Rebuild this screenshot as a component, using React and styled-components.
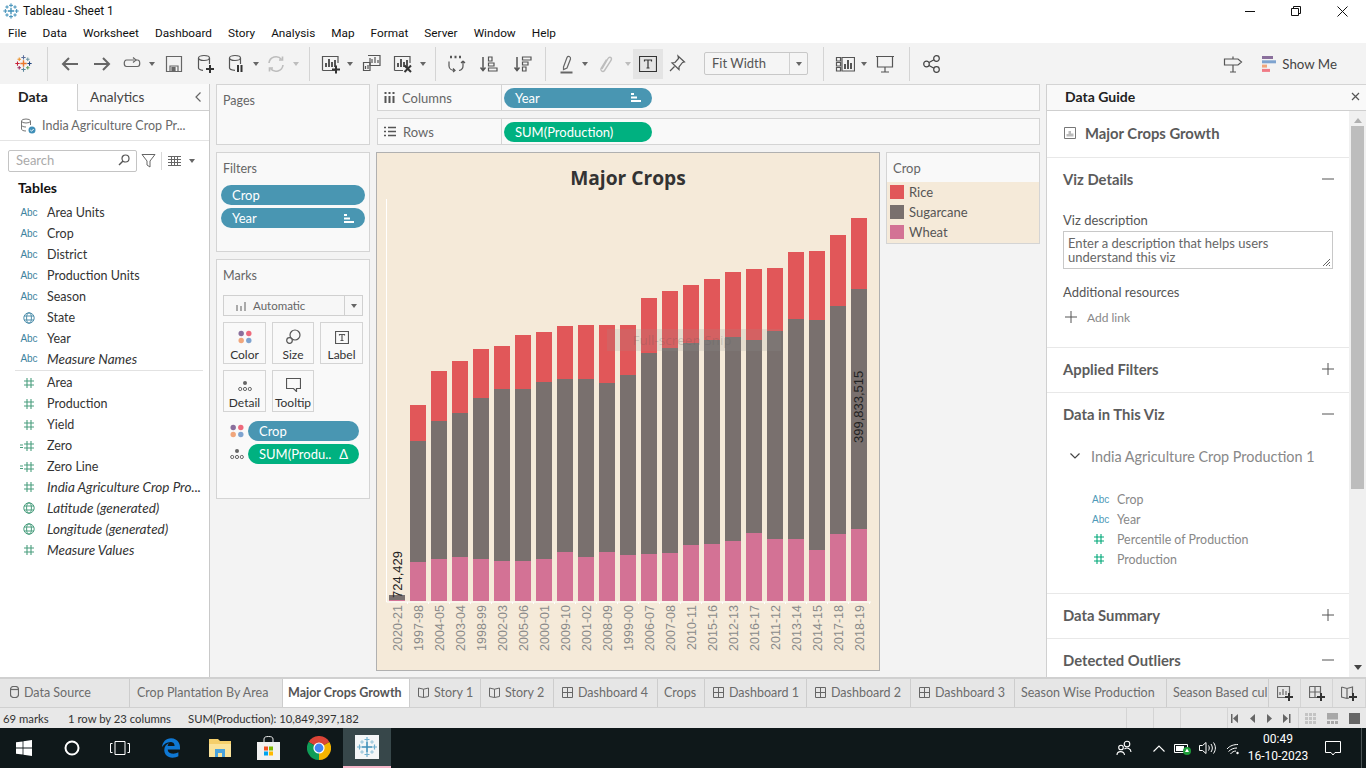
import React from 'react'
import styled, { createGlobalStyle } from 'styled-components'
import { FaEdgeLegacy } from 'react-icons/fa'

const BOOK = `Lato, "Open Sans", sans-serif`
const UI = `Roboto, "Open Sans", sans-serif`

const GlobalStyle = createGlobalStyle`
    html, body {
        margin: 0;
        padding: 0;
        overflow: hidden;
        background: #fff;
    }
    * {
        box-sizing: border-box;
    }
    svg {
        display: block;
        flex: none;
    }
`

const Page = styled.div`
    width: 1366px;
    height: 768px;
    display: flex;
    flex-direction: column;
    overflow: hidden;
    font-family: ${BOOK};
    font-size: 12.5px;
    color: #333;
`

/* window title + menu */
const TitleBar = styled.div`
    height: 22px;
    display: flex;
    align-items: center;
    padding-left: 3px;
    font-family: ${UI};
    font-size: 11.9px;
    color: #111;
`
const TitleText = styled.span`
    margin-left: 4px;
`
const WinButtons = styled.div`
    margin-left: auto;
    margin-right: 1px;
    display: flex;
`
const WinButton = styled.div`
    width: 46px;
    height: 20px;
    display: flex;
    align-items: center;
    justify-content: center;
`
const MenuBar = styled.div`
    height: 21px;
    display: flex;
    align-items: center;
    gap: 16px;
    padding-left: 8px;
    font-family: ${UI};
    font-size: 11.8px;
    color: #111;
`

/* toolbar */
const Toolbar = styled.div`
    height: 41px;
    display: flex;
    align-items: center;
    background: #f3f3f3;
`
const Tool = styled.div`
    width: ${p => p.$w}px;
    height: 30px;
    display: flex;
    align-items: center;
    justify-content: center;
    background: ${p => (p.$active ? '#e4e4e4' : 'transparent')};
`
const LogoTool = styled(Tool)`
    padding-left: 5px;
`
const ToolSep = styled.div`
    width: 1px;
    height: 34px;
    margin: 0 6px;
    background: #d4d4d4;
`
const Caret = styled.span`
    display: block;
    width: 0;
    height: 0;
    flex: none;
    border-left: 3.5px solid transparent;
    border-right: 3.5px solid transparent;
    border-top: 4px solid ${p => (p.$faded ? '#bdbdbd' : '#666')};
`
const FitBox = styled.div`
    width: 104px;
    height: 23px;
    margin: 0 9px 0 13px;
    display: flex;
    align-items: center;
    border: 1px solid #c8c8c8;
    border-radius: 2px;
    background: #f5f5f5;
    font-size: 13px;
    color: #555;
`
const FitLabel = styled.span`
    flex: 1;
    padding-left: 7px;
    padding-bottom: 2px;
`
const FitArrow = styled.span`
    width: 18px;
    height: 100%;
    display: flex;
    align-items: center;
    justify-content: center;
    border-left: 1px solid #d0d0d0;
`
const ToolRight = styled.div`
    margin-left: auto;
    padding-right: 29px;
    display: flex;
    align-items: center;
`
const ShowMe = styled.div`
    display: flex;
    align-items: center;
    gap: 6px;
    margin-left: 19px;
    font-size: 13.3px;
    color: #444;
`

/* main area */
const Main = styled.div`
    height: 593px;
    display: flex;
    background: #f3f3f3;
    overflow: hidden;
`
const DataPane = styled.div`
    width: 210px;
    flex: none;
    background: #fff;
    border-right: 1px solid #c9c9c9;
`
const PaneTabs = styled.div`
    height: 27px;
    display: flex;
`
const DataTab = styled.div`
    width: 77px;
    display: flex;
    align-items: center;
    padding: 0 0 2px 18px;
    font-weight: 700;
    font-size: 14px;
    color: #222;
`
const AnalyticsTab = styled.div`
    flex: 1;
    display: flex;
    align-items: center;
    justify-content: space-between;
    padding: 0 7px 0 12px;
    background: #fafafa;
    border-left: 1px solid #cfcfcf;
    border-bottom: 1px solid #cfcfcf;
    font-size: 13.6px;
    color: #444;
`
const SourceRow = styled.div`
    height: 30px;
    display: flex;
    align-items: center;
    gap: 6px;
    padding-left: 20px;
    border-bottom: 1px solid #e4e4e4;
    color: #6a6a6a;
`
const SearchRow = styled.div`
    display: flex;
    align-items: center;
    height: 21px;
    margin-top: 9px;
    padding-left: 8px;
`
const SearchBox = styled.div`
    width: 129px;
    height: 22px;
    display: flex;
    align-items: center;
    justify-content: space-between;
    padding: 0 6px 1px 7px;
    margin-right: 4px;
    border: 1px solid #c4c4c4;
    border-radius: 2px;
    color: #aaa;
    font-size: 13px;
`
const SearchSep = styled.div`
    width: 1px;
    height: 18px;
    margin: 0 6px 0 5px;
    background: #d8d8d8;
`
const ListCaretGap = styled.span`
    width: 8px;
`
const TablesHead = styled.div`
    height: 31px;
    padding: 8px 0 0 18px;
    font-size: 14px;
    font-weight: 700;
    color: #111;
`
const FieldRow = styled.div`
    height: 21px;
    display: flex;
    align-items: center;
    padding-bottom: ${p => (p.$italic ? 2 : 0)}px;
    font-style: ${p => (p.$italic ? 'italic' : 'normal')};
    font-size: ${p => (p.$italic ? 13.5 : 12.5)}px;
    color: #333;
    white-space: nowrap;
`
const FieldIcon = styled.span`
    width: 47px;
    flex: none;
    display: flex;
    justify-content: center;
    padding-left: 11px;
`
const AbcText = styled.span`
    font-family: "Liberation Sans", sans-serif;
    font-style: normal;
    font-size: 10px;
    color: ${p => p.$c || '#3f84a0'};
`
const FieldSep = styled.div`
    height: 1px;
    margin: 0 6px 0 15px;
    background: #e2e2e2;
`
const MeasureList = styled.div`
    margin-top: 1px;
`

const SideCol = styled.div`
    width: 154px;
    flex: none;
    margin-left: 6px;
    display: flex;
    flex-direction: column;
    gap: 7px;
`
const Card = styled.div`
    height: ${p => p.$h}px;
    padding: 0 4px 0 6px;
    background: #f9f9f9;
    border: 1px solid #d4d4d4;
`
const CardTitle = styled.div`
    height: 30px;
    display: flex;
    align-items: center;
    color: #666;
`
const Pill = styled.div`
    width: ${p => p.$w}px;
    height: 20px;
    display: flex;
    align-items: center;
    justify-content: space-between;
    padding: 0 11px;
    border-radius: 10px;
    background: ${p => (p.$green ? '#00b180' : '#4996b2')};
    color: #fff;
    font-size: 13px;
    white-space: nowrap;
`
const PillStack = styled.div`
    display: flex;
    flex-direction: column;
    gap: 3px;
    margin: 2px 0 0 -2px;
`
const MarkSelect = styled.div`
    width: 140px;
    height: 21px;
    margin-top: 5px;
    display: flex;
    align-items: center;
    background: #f7f7f7;
    border: 1px solid #d0d0d0;
    color: #666;
    font-size: 11.5px;
`
const MarkSelectText = styled.span`
    flex: 1;
    display: flex;
    align-items: center;
    gap: 7px;
    padding-left: 12px;
`
const MarkGrid = styled.div`
    display: grid;
    grid-template-columns: 43px 42px 43px;
    grid-auto-rows: 42px;
    gap: 6px;
    margin-top: 6px;
`
const MarkButton = styled.div`
    display: flex;
    flex-direction: column;
    align-items: center;
    justify-content: flex-end;
    gap: 3px;
    padding-bottom: 1px;
    border: 1px solid #d4d4d4;
    font-size: 12px;
    color: #333;
`
const MarkRow = styled.div`
    display: flex;
    align-items: center;
    gap: 4px;
    margin-left: 7px;
    height: 20px;
`
const MarkRows = styled.div`
    display: flex;
    flex-direction: column;
    gap: 3px;
    margin-top: 9px;
`

const CenterCol = styled.div`
    width: 664px;
    flex: none;
    margin-left: 6px;
    display: flex;
    flex-direction: column;
    gap: 7px;
`
const Shelf = styled.div`
    height: 27px;
    margin-left: 1px;
    display: flex;
    background: #f9f9f9;
    border: 1px solid #d4d4d4;
`
const ShelfLabel = styled.div`
    width: 124px;
    display: flex;
    align-items: center;
    gap: 7px;
    padding-left: 6px;
    border-right: 1px solid #d4d4d4;
    font-size: 13px;
    color: #666;
`
const ShelfPills = styled.div`
    display: flex;
    align-items: center;
    padding-left: 2px;
`
const VizRow = styled.div`
    display: flex;
    gap: 6px;
    align-items: flex-start;
`
const Viz = styled.div`
    position: relative;
    width: 504px;
    height: 519px;
    background: #f5ead9;
    border: 1px solid #b0b0b0;
`
const VizTitle = styled.div`
    height: 46px;
    display: flex;
    align-items: center;
    justify-content: center;
    padding-top: 3px;
    font-family: "Open Sans", sans-serif;
    font-size: 19.2px;
    font-weight: 700;
    color: #333;
`
/* the snipping tool hint floating over the picture */
const SnipHint = styled.div`
    position: absolute;
    left: 230px;
    top: 176px;
    width: 174px;
    height: 22px;
    display: flex;
    align-items: center;
    justify-content: center;
    padding-right: 24px;
    background: rgba(150, 150, 150, 0.16);
    font-family: "Open Sans", sans-serif;
    font-size: 13.5px;
    color: rgba(90, 90, 90, 0.22);
`
const Legend = styled.div`
    width: 154px;
    height: 92px;
    border: 1px solid #d4d4d4;
    background: #f5ead9;
    font-size: 13px;
`
const LegendHead = styled.div`
    height: 29px;
    display: flex;
    align-items: center;
    padding-left: 6px;
    background: #f9f9f9;
    color: #666;
`
const LegendRow = styled.div`
    height: 20px;
    display: flex;
    align-items: center;
    gap: 5px;
    padding-left: 3px;
    color: #555;
`
const Swatch = styled.span`
    width: 14px;
    height: 14px;
    background: ${p => p.$c};
`

/* data guide */
const Guide = styled.div`
    flex: 1;
    margin-left: 6px;
    display: flex;
    flex-direction: column;
    border-left: 1px solid #d0d0d0;
    background: #fff;
`
const GuideHead = styled.div`
    height: 27px;
    flex: none;
    display: flex;
    align-items: center;
    justify-content: space-between;
    padding: 0 6px 2px 18px;
    background: #f9f9f9;
    border-top: 1px solid #d4d4d4;
    border-bottom: 1px solid #cfcfcf;
    font-weight: 700;
    font-size: 14px;
    color: #222;
`
const GuideMain = styled.div`
    flex: 1;
    display: flex;
    min-height: 0;
`
const GuideBody = styled.div`
    flex: 1;
    overflow: hidden;
`
const GuideTitle = styled.div`
    height: 47px;
    display: flex;
    align-items: center;
    gap: 9px;
    padding: 0 0 2px 17px;
    border-bottom: 1px solid #e8e8e8;
    font-size: 14.8px;
    font-weight: 700;
    color: #5a5a5a;
`
const Section = styled.div`
    height: ${p => p.$h}px;
    padding: 0 15px 0 16px;
    border-bottom: 1px solid #e8e8e8;
`
const SectionHead = styled.div`
    height: 44px;
    display: flex;
    align-items: center;
    justify-content: space-between;
    padding-bottom: 2px;
    font-size: 14.8px;
    font-weight: 700;
    color: #5c5c5c;
`
const GuideLabel = styled.div`
    height: 16px;
    margin-top: ${p => p.$mt}px;
    display: flex;
    align-items: center;
    font-size: 13px;
    color: #555;
`
const DescBox = styled.div`
    position: relative;
    width: 270px;
    height: 38px;
    margin-top: 3px;
    padding: 4px 4px;
    border: 1px solid #c8c8c8;
    font-size: 13px;
    line-height: 14px;
    color: #666;
`
const ResizeGrip = styled.svg`
    position: absolute;
    right: 1px;
    bottom: 1px;
`
const AddLink = styled.div`
    height: 16px;
    margin-top: 9px;
    display: flex;
    align-items: center;
    gap: 10px;
    padding-left: 2px;
    font-size: 12px;
    color: #888;
`
const TreeHead = styled.div`
    height: 20px;
    margin-top: 9px;
    display: flex;
    align-items: center;
    gap: 11px;
    padding-left: 7px;
    font-size: 14.4px;
    color: #888;
`
const TreeList = styled.div`
    margin-top: 23px;
    padding-left: 29px;
`
const TreeRow = styled.div`
    height: 20px;
    display: flex;
    align-items: center;
    font-size: 12.4px;
    color: #888;
`
const TreeIcon = styled.span`
    width: 25px;
    display: flex;
    padding-left: ${p => p.$pl || 0}px;
`
const ScrollTrack = styled.div`
    width: 17px;
    flex: none;
    display: flex;
    flex-direction: column;
    align-items: center;
    background: #f0f0f0;
`
const ScrollThumb = styled.div`
    width: 13px;
    height: 363px;
    margin-top: 3px;
    background: #bdbdbd;
`
const ScrollUp = styled.span`
    margin-top: 7px;
    width: 0;
    height: 0;
    border-left: 4px solid transparent;
    border-right: 4px solid transparent;
    border-bottom: 5px solid #b0b0b0;
`
const ScrollDown = styled.span`
    margin-top: auto;
    margin-bottom: 7px;
    width: 0;
    height: 0;
    border-left: 4px solid transparent;
    border-right: 4px solid transparent;
    border-top: 5px solid #444;
`

/* sheet tabs */
const TabBar = styled.div`
    height: 31px;
    display: flex;
    background: #e6e6e6;
    border-top: 2px solid #d0d0d0;
    border-bottom: 1px solid #d0d0d0;
`
const SheetTab = styled.div`
    width: ${p => p.$w}px;
    flex: none;
    display: flex;
    align-items: center;
    gap: 5px;
    padding: 0 0 2px ${p => p.$pl}px;
    overflow: hidden;
    white-space: nowrap;
    border-right: 1px solid #cdcdcd;
    background: ${p => (p.$on ? '#fff' : 'transparent')};
    font-weight: ${p => (p.$on ? 700 : 400)};
    color: ${p => (p.$on ? '#555' : '#6c6c6c')};
`
const AddTab = styled.div`
    width: ${p => p.$w}px;
    flex: none;
    display: flex;
    align-items: center;
    justify-content: center;
    border-right: 1px solid #d4d4d4;
`

/* status bar */
const StatusBar = styled.div`
    height: 20px;
    display: flex;
    align-items: center;
    padding-left: 3px;
    background: #e8e8e8;
    font-size: 11.3px;
    color: #333;
`
const StatusItem = styled.span`
    width: ${p => p.$w}px;
    flex: none;
    white-space: nowrap;
`
const StatusCell = styled.div`
    width: ${p => p.$w}px;
    height: 100%;
    flex: none;
    display: flex;
    align-items: center;
    justify-content: space-around;
    border-left: 1px solid #d4d4d4;
`
const StatusRight = styled.div`
    margin-left: auto;
    height: 100%;
    display: flex;
`

/* windows taskbar */
const Taskbar = styled.div`
    flex: 1;
    display: flex;
    align-items: center;
    background: #0f181a;
`
const TaskItem = styled.div`
    width: ${p => p.$w}px;
    height: 100%;
    flex: none;
    display: flex;
    align-items: center;
    justify-content: center;
    background: ${p => (p.$on ? '#37474a' : 'transparent')};
    border-bottom: ${p => (p.$on ? '2px solid #f4b6c8' : 'none')};
`
const Tray = styled.div`
    margin-left: auto;
    height: 100%;
    display: flex;
    align-items: center;
`
const TrayItem = styled.div`
    width: ${p => p.$w}px;
    flex: none;
    display: flex;
    align-items: center;
    justify-content: center;
`
const ShowDesktop = styled.div`
    width: 5px;
    height: 100%;
    margin-left: 7px;
    border-left: 1px solid #4a5355;
`
const Clock = styled.div`
    width: 68px;
    flex: none;
    text-align: center;
    font-family: ${UI};
    font-size: 12px;
    line-height: 17px;
    color: #fff;
`

/* little drawings */
const plus = (x, y, r, c, w = 1.5) => (
    <path key={`${x}-${y}`} d={`M${x - r} ${y}H${x + r}M${x} ${y - r}V${y + r}`} stroke={c} strokeWidth={w} fill="none" />
)
const TableauMark = ({ size = 18, colors }) => {
    const c = colors || ['#e8762b', '#5b6f9a', '#c72037', '#1f447d', '#59879b', '#eb912b', '#7099a6', '#9c2f5e', '#5fa05a']
    return (
        <svg width={size} height={size} viewBox="0 0 24 24">
            {plus(12, 12, 4.5, c[0], 2)}
            {plus(12, 3.5, 3, c[1])}
            {plus(3.5, 12, 3, c[2])}
            {plus(20.5, 12, 3, c[3])}
            {plus(12, 20.5, 3, c[4])}
            {plus(6, 6, 2.5, c[5])}
            {plus(18, 6, 2.5, c[6])}
            {plus(6, 18, 2.5, c[7])}
            {plus(18, 18, 2.5, c[8])}
        </svg>
    )
}
const BLUE_MARK = Array(9).fill('#3f8fb8')

const Ico = ({ w = 20, h = 20, c = '#555', sw = 1.2, children }) => (
    <svg width={w} height={h} viewBox={`0 0 ${w} ${h}`} fill="none" stroke={c} strokeWidth={sw}>{children}</svg>
)
const Dots = () => (
    <svg width="14" height="14" viewBox="0 0 14 14">
        <circle cx="3.2" cy="3.5" r="2.7" fill="#8a6f9c" />
        <circle cx="10.8" cy="3.5" r="2.7" fill="#ee6a7c" />
        <circle cx="3.2" cy="10.5" r="2.7" fill="#f0a67c" />
        <circle cx="10.8" cy="10.5" r="2.7" fill="#7ea3cf" />
    </svg>
)
const DetailDots = ({ c = '#666' }) => (
    <svg width="14" height="12" viewBox="0 0 14 12" fill="none" stroke={c}>
        <circle cx="7" cy="3" r="2" fill={c} stroke="none" />
        <circle cx="2.2" cy="9" r="1.6" />
        <circle cx="7" cy="9" r="1.6" />
        <circle cx="11.8" cy="9" r="1.6" />
    </svg>
)
const SortMark = () => (
    <svg width="10" height="9" viewBox="0 0 10 9" fill="#fff">
        <rect x="0" y="0" width="3" height="2" />
        <rect x="0" y="3.5" width="6" height="2" />
        <rect x="0" y="7" width="10" height="2" />
    </svg>
)
const Hash = ({ c = '#4a9e7e' }) => (
    <svg width="10" height="10" viewBox="0 0 10 10" stroke={c} strokeWidth="1.1">
        <path d="M3 0V10M7 0V10M0 3H10M0 7H10" />
    </svg>
)
const CalcSvg = styled.svg`
    margin-right: 4px;
`
const CalcHash = () => (
    <CalcSvg width="14" height="10" viewBox="0 0 14 10" stroke="#4a9e7e" strokeWidth="1.1">
        <path d="M0 4H3M0 6.5H3" />
        <path d="M7 0V10M11 0V10M4 3H14M4 7H14" />
    </CalcSvg>
)
const Globe = ({ c = '#4f8fab' }) => (
    <svg width="12" height="12" viewBox="0 0 12 12" fill="none" stroke={c}>
        <circle cx="6" cy="6" r="5.2" />
        <ellipse cx="6" cy="6" rx="2.4" ry="5.2" />
        <path d="M1 4H11M1 8H11" />
    </svg>
)
const PlusIco = ({ c = '#555' }) => (
    <svg width="12" height="12" viewBox="0 0 12 12" stroke={c}>
        <path d="M0 6H12M6 0V12" />
    </svg>
)
const MinusIco = () => (
    <svg width="12" height="12" viewBox="0 0 12 12" stroke="#555">
        <path d="M0 6H12" />
    </svg>
)
const AddMark = ({ x, y }) => (
    <path d={`M${x - 4} ${y}H${x + 4}M${x} ${y - 4}V${y + 4}`} stroke="#333" strokeWidth="2" />
)
const GridTab = () => (
    <svg width="11" height="11" viewBox="0 0 11 11" fill="none" stroke="#666">
        <path d="M.5.5H10.5V10.5H.5ZM5.5.5V10.5M.5 5.5H10.5" />
    </svg>
)
const BookTab = () => (
    <svg width="11" height="11" viewBox="0 0 11 11" fill="none" stroke="#666">
        <path d="M.5 1L5.5 2.2L10.5 1V9.5L5.5 10.5L.5 9.5ZM5.5 2.2V10.5" />
    </svg>
)
const BarMini = ({ c = '#555' }) => (
    <path d="M5 13V9M8 13V5M11 13V8M14 13V6" stroke={c} strokeWidth="2" />
)

const BARS = [
    ['2020-21', 595, 595, 600],
    ['1997-98', 405, 441, 562],
    ['2004-05', 371, 421, 559],
    ['2003-04', 361, 413, 557],
    ['1998-99', 349, 398, 559],
    ['2002-03', 346, 389, 561],
    ['2005-06', 335, 389, 561],
    ['2000-01', 332, 382, 559],
    ['2009-10', 326, 379, 552],
    ['2001-02', 325, 379, 557],
    ['2008-09', 325, 383, 552],
    ['1999-00', 325, 375, 555],
    ['2006-07', 298, 353, 554],
    ['2007-08', 291, 348, 553],
    ['2010-11', 285, 343, 545],
    ['2015-16', 279, 340, 544],
    ['2012-13', 272, 337, 541],
    ['2016-17', 269, 340, 533],
    ['2011-12', 268, 331, 539],
    ['2013-14', 252, 319, 539],
    ['2014-15', 251, 320, 550],
    ['2017-18', 235, 306, 534],
    ['2018-19', 218, 289, 529],
]
const BASE = 601

// viewBox is in page coordinates so the numbers above read straight off the screenshot
const Chart = () => (
    <svg width="502" height="471" viewBox="377 199 502 471">
        <path d="M386.5 199V602H871" stroke="#fff" fill="none" />
        {BARS.map((b, i) => (
            <path key={b[0]} d={`M${386.5 + 21 * (i + 1)} 602v2`} stroke="#fff" />
        ))}
        {BARS.map(([year, red, gray, pink], i) => {
            const x = 389 + 21 * i
            return (
                <g key={year}>
                    <rect x={x} y={red} width="16" height={gray - red} fill="#e15759" />
                    <rect x={x} y={gray} width="16" height={pink - gray} fill="#79706e" />
                    <rect x={x} y={pink} width="16" height={BASE - pink} fill="#d37295" />
                    <text
                        transform={`translate(${x + 12.5} 605) rotate(-90)`}
                        textAnchor="end"
                        fontFamily="Liberation Sans, sans-serif"
                        fontSize="12.5"
                        fill="#8a8a8a"
                    >
                        {year}
                    </text>
                </g>
            )
        })}
        <text transform="translate(401.5 598) rotate(-90)" fontFamily="Liberation Sans, sans-serif" fontSize="13" fill="#222">724,429</text>
        <text transform="translate(863 443) rotate(-90)" fontFamily="Liberation Sans, sans-serif" fontSize="13" fill="#222">399,833,515</text>
    </svg>
)

const MENU = ['File', 'Data', 'Worksheet', 'Dashboard', 'Story', 'Analysis', 'Map', 'Format', 'Server', 'Window', 'Help']

const FIELDS_DIM = [
    ['abc', 'Area Units'],
    ['abc', 'Crop'],
    ['abc', 'District'],
    ['abc', 'Production Units'],
    ['abc', 'Season'],
    ['globe', 'State'],
    ['abc', 'Year'],
    ['abc', 'Measure Names', true],
]
const FIELDS_MEAS = [
    ['hash', 'Area'],
    ['hash', 'Production'],
    ['hash', 'Yield'],
    ['calc', 'Zero'],
    ['calc', 'Zero Line'],
    ['hash', 'India Agriculture Crop Pro...', true],
    ['gglobe', 'Latitude (generated)', true],
    ['gglobe', 'Longitude (generated)', true],
    ['hash', 'Measure Values', true],
]
const fieldIcon = kind => {
    if (kind === 'abc') return <AbcText>Abc</AbcText>
    if (kind === 'globe') return <Globe />
    if (kind === 'gglobe') return <Globe c="#4a9e7e" />
    if (kind === 'calc') return <CalcHash />
    return <Hash />
}

const TABS = [
    { name: 'Crop Plantation By Area', w: 153, pl: 7 },
    { name: 'Major Crops Growth', w: 127, pl: 5, on: true },
    { name: 'Story 1', w: 71, pl: 8, icon: 'book' },
    { name: 'Story 2', w: 73, pl: 8, icon: 'book' },
    { name: 'Dashboard 4', w: 104, pl: 8, icon: 'grid' },
    { name: 'Crops', w: 47, pl: 6 },
    { name: 'Dashboard 1', w: 102, pl: 8, icon: 'grid' },
    { name: 'Dashboard 2', w: 104, pl: 8, icon: 'grid' },
    { name: 'Dashboard 3', w: 104, pl: 8, icon: 'grid' },
    { name: 'Season Wise Production', w: 152, pl: 6 },
    { name: 'Season Based cul', w: 102, pl: 6 },
]

export default function App() {
    return (
        <Page>
            <GlobalStyle />
            <TitleBar>
                <TableauMark size={16} colors={BLUE_MARK} />
                <TitleText>Tableau - Sheet 1</TitleText>
                <WinButtons>
                    <WinButton>
                        <Ico w={10} h={10} c="#111" sw={1}><path d="M0 5.5H10" /></Ico>
                    </WinButton>
                    <WinButton>
                        <Ico w={10} h={10} c="#111" sw={1}><path d="M.5 2.5H7.5V9.5H.5ZM2.5 2.5V.5H9.5V7.5H7.5" /></Ico>
                    </WinButton>
                    <WinButton>
                        <Ico w={11} h={11} c="#111" sw={1}><path d="M.5.5L10.5 10.5M10.5.5L.5 10.5" /></Ico>
                    </WinButton>
                </WinButtons>
            </TitleBar>
            <MenuBar>
                {MENU.map(m => <span key={m}>{m}</span>)}
            </MenuBar>

            <Toolbar>
                <LogoTool $w={41}><TableauMark size={17} /></LogoTool>
                <ToolSep />
                <Tool $w={32}>
                    <Ico c="#666" sw={2}><path d="M18 10H3M9 4L3 10L9 16" /></Ico>
                </Tool>
                <Tool $w={32}>
                    <Ico c="#666" sw={2}><path d="M2 10H17M11 4L17 10L11 16" /></Ico>
                </Tool>
                <Tool $w={27}>
                    <Ico c="#666"><path d="M12 6H4.5C1.5 6 1.5 12.5 4.5 12.5H15.5C18.5 12.5 18.5 6 15.5 6H14" /><path d="M11 3.5L14 6L11 8.5" /></Ico>
                </Tool>
                <Tool $w={14}><Caret /></Tool>
                <Tool $w={30}>
                    <Ico c="#666"><path d="M2.5 2.5H17.5V17.5H2.5Z" /><path d="M6 17V12H14V17" /><rect x="8" y="13.5" width="3" height="3.5" fill="#666" /></Ico>
                </Tool>
                <Tool $w={32}>
                    <Ico c="#555"><ellipse cx="9" cy="4" rx="5.5" ry="2.5" /><path d="M3.5 4V14C3.5 15.5 5.5 16 8 16.3M14.5 4V10" /><AddMark x={15} y={15} /></Ico>
                </Tool>
                <Tool $w={29}>
                    <Ico c="#555"><ellipse cx="9" cy="4" rx="5.5" ry="2.5" /><path d="M3.5 4V14C3.5 15.5 5.5 16 9 16.3M14.5 4V10" /><path d="M12 11V18M15.5 11V18" stroke="#333" strokeWidth="2" /></Ico>
                </Tool>
                <Tool $w={12}><Caret /></Tool>
                <Tool $w={27}>
                    <Ico c="#bdbdbd" sw={1.6}><path d="M3 9A7 7 0 0 1 15.5 5.5M17 11A7 7 0 0 1 4.5 14.5" /><path d="M13 6H16.5V2.5M7 14H3.5V17.5" /></Ico>
                </Tool>
                <Tool $w={14}><Caret $faded /></Tool>
                <ToolSep />
                <Tool $w={29}>
                    <Ico c="#555"><path d="M1.5 16.5V2.5H17V9M14 16.5H1.5" /><BarMini /><AddMark x={15} y={15.5} /></Ico>
                </Tool>
                <Tool $w={10}><Caret /></Tool>
                <Tool $w={33}>
                    <Ico c="#555"><path d="M6 1.5H18V11.5H8V4" /><path d="M10 9V5M13 9V3M16 9V6" /><path d="M1.5 8.5H8V16.5H1.5Z" /><path d="M3.5 15V12M6 15V11" /></Ico>
                </Tool>
                <Tool $w={29}>
                    <Ico c="#555"><path d="M1.5 16.5V2.5H17V9M10 16.5H1.5" /><BarMini /><path d="M11.5 11.5L18 18M18 11.5L11.5 18" stroke="#333" strokeWidth="2" /></Ico>
                </Tool>
                <Tool $w={12}><Caret /></Tool>
                <ToolSep />
                <Tool $w={30}>
                    <Ico c="#555"><path d="M3 3H5M7.5 3H9.5M12 3H14" strokeWidth="2.5" /><path d="M2 7.5V12C2 15 5 16.5 8 16.5M16 7V12C16 14 14.5 16 12 16.5M6 14.5L8 16.5L6 18M16 7L14 9M16 7L18 9" /></Ico>
                </Tool>
                <Tool $w={34}>
                    <Ico c="#555"><path d="M4 3V16M1.5 13.5L4 16.5L6.5 13.5" strokeWidth="1.5" /><path d="M9.5 3H13V7H9.5ZM9.5 9H15V12H9.5ZM9.5 14H18V17H9.5Z" /></Ico>
                </Tool>
                <Tool $w={33}>
                    <Ico c="#555"><path d="M4 3V16M1.5 13.5L4 16.5L6.5 13.5" strokeWidth="1.5" /><path d="M9.5 3H18V6H9.5ZM9.5 8H15V11H9.5ZM9.5 13H13V17H9.5Z" /></Ico>
                </Tool>
                <ToolSep />
                <Tool $w={30}>
                    <Ico c="#666"><path d="M6.5 13L10 3.5C11 1.5 14 2.5 13.5 5L10 14L6.5 15.5Z" /><path d="M3.5 18.5H15.5" strokeWidth="2" /></Ico>
                </Tool>
                <Tool $w={6}><Caret /></Tool>
                <Tool $w={34}>
                    <Ico c="#bdbdbd" sw={1.4}><path d="M7 15L13 4.5C14.5 2 17.5 3.5 16 6.5L9.5 16.5C8 18.5 5 17 6 14.5L11.5 5.5" /></Ico>
                </Tool>
                <Tool $w={11}><Caret $faded /></Tool>
                <Tool $w={30} $active>
                    <Ico w={18} h={16} c="#333"><path d="M.5.5H17.5V15.5H.5Z" /><path d="M5.5 5.5V4H12.5V5.5M9 4V12M7.5 12H10.5" /></Ico>
                </Tool>
                <Tool $w={28}>
                    <Ico c="#555"><path d="M11 2L17.5 8L15.5 8.5L12 13L12 15.5L5 9L8 8.5L11.5 4.5ZM7.5 12.5L3 17" /></Ico>
                </Tool>
                <FitBox>
                    <FitLabel>Fit Width</FitLabel>
                    <FitArrow><Caret /></FitArrow>
                </FitBox>
                <ToolSep />
                <Tool $w={30}>
                    <Ico c="#555"><path d="M1.5 3.5H5.5V7H1.5ZM1.5 8.5H5.5V12H1.5ZM1.5 13.5H5.5V17H1.5ZM7 3.5H19.5V17H7Z" /><path d="M10 15V10M13 15V6M16 15V9" strokeWidth="2" /></Ico>
                </Tool>
                <Tool $w={7}><Caret /></Tool>
                <Tool $w={36}>
                    <Ico c="#555"><path d="M1 2.5H19M2.5 2.5V13H17.5V2.5M10 13V18M6 18H14" /></Ico>
                </Tool>
                <ToolSep />
                <Tool $w={32}>
                    <Ico c="#444"><circle cx="4.5" cy="10" r="2.8" /><circle cx="14.5" cy="4.5" r="2.8" /><circle cx="14.5" cy="15.5" r="2.8" /><path d="M7 8.5L12 5.8M7 11.5L12 14.2" /></Ico>
                </Tool>
                <ToolRight>
                    <Ico c="#555"><path d="M1.5 5H15L18.5 8L15 11H1.5ZM10 5V2.5M10 11V18M7 18H13" /></Ico>
                    <ShowMe>
                        <svg width="14" height="16" viewBox="0 0 14 16">
                            <rect x="0" y="0" width="11" height="3" fill="#8a6f9c" />
                            <rect x="0" y="4.3" width="14" height="3" fill="#7ea3cf" />
                            <rect x="0" y="8.6" width="5" height="3" fill="#f0a67c" />
                            <rect x="0" y="12.9" width="8" height="3" fill="#f07a85" />
                        </svg>
                        Show Me
                    </ShowMe>
                </ToolRight>
            </Toolbar>

            <Main>
                <DataPane>
                    <PaneTabs>
                        <DataTab>Data</DataTab>
                        <AnalyticsTab>
                            Analytics
                            <Ico w={8} h={12} c="#666"><path d="M6.5 1.5L2 6L6.5 10.5" /></Ico>
                        </AnalyticsTab>
                    </PaneTabs>
                    <SourceRow>
                        <svg width="16" height="16" viewBox="0 0 16 16" fill="none" stroke="#777">
                            <ellipse cx="6" cy="3" rx="4.5" ry="2" />
                            <path d="M1.5 3V11C1.5 12 3 13 6 13M10.5 3V7M1.5 7C1.5 8 3 9 6 9" />
                            <circle cx="12" cy="12" r="3.5" fill="#3f8fb8" stroke="none" />
                            <path d="M10.3 12L11.5 13.2L13.7 11" stroke="#fff" />
                        </svg>
                        India Agriculture Crop Pr...
                    </SourceRow>
                    <SearchRow>
                        <SearchBox>
                            Search
                            <Ico w={12} h={12} c="#555"><circle cx="7.5" cy="4.5" r="3.5" /><path d="M5 7L1 11" strokeWidth="1.5" /></Ico>
                        </SearchBox>
                        <Ico w={15} h={15} c="#666" sw={1}>
                            <path d="M1 1.5H14L9 8V14L6 12V8Z" />
                        </Ico>
                        <SearchSep />
                        <Ico w={13} h={10} c="#666" sw={1}>
                            <path d="M0 .5H13M0 3.5H13M0 6.5H13M0 9.5H13M3.5 0V10M6.5 0V10M9.5 0V10" />
                        </Ico>
                        <ListCaretGap />
                        <Caret />
                    </SearchRow>
                    <TablesHead>Tables</TablesHead>
                    {FIELDS_DIM.map(([kind, name, italic]) => (
                        <FieldRow key={name} $italic={italic}>
                            <FieldIcon>{fieldIcon(kind)}</FieldIcon>
                            {name}
                        </FieldRow>
                    ))}
                    <FieldSep />
                    <MeasureList>
                        {FIELDS_MEAS.map(([kind, name, italic]) => (
                            <FieldRow key={name} $italic={italic}>
                                <FieldIcon>{fieldIcon(kind)}</FieldIcon>
                                {name}
                            </FieldRow>
                        ))}
                    </MeasureList>
                </DataPane>

                <SideCol>
                    <Card $h={61}>
                        <CardTitle>Pages</CardTitle>
                    </Card>
                    <Card $h={100}>
                        <CardTitle>Filters</CardTitle>
                        <PillStack>
                            <Pill $w={144}>Crop</Pill>
                            <Pill $w={144}>Year<SortMark /></Pill>
                        </PillStack>
                    </Card>
                    <Card $h={240}>
                        <CardTitle>Marks</CardTitle>
                        <MarkSelect>
                            <MarkSelectText>
                                <svg width="10" height="10" viewBox="0 0 10 10" fill="#aaa">
                                    <rect x="0" y="4" width="2" height="6" />
                                    <rect x="4" y="5" width="2" height="5" />
                                    <rect x="8" y="1" width="2" height="9" />
                                </svg>
                                Automatic
                            </MarkSelectText>
                            <FitArrow><Caret /></FitArrow>
                        </MarkSelect>
                        <MarkGrid>
                            <MarkButton><Dots />Color</MarkButton>
                            <MarkButton>
                                <Ico w={15} h={15} c="#555"><circle cx="9" cy="6" r="5" /><circle cx="3.5" cy="11.5" r="2.8" fill="#f9f9f9" /></Ico>
                                Size
                            </MarkButton>
                            <MarkButton>
                                <Ico w={14} h={13} c="#555"><path d="M.5.5H13.5V12.5H.5Z" /><path d="M4.5 4.5V3.5H9.5V4.5M7 3.5V9.5M5.5 9.5H8.5" /></Ico>
                                Label
                            </MarkButton>
                            <MarkButton><DetailDots />Detail</MarkButton>
                            <MarkButton>
                                <Ico w={15} h={14} c="#555"><path d="M.5.5H14.5V10.5H10.5V13.5L7.5 10.5H.5Z" /></Ico>
                                Tooltip
                            </MarkButton>
                        </MarkGrid>
                        <MarkRows>
                            <MarkRow><Dots /><Pill $w={111}>Crop</Pill></MarkRow>
                            <MarkRow><DetailDots /><Pill $w={111} $green>SUM(Produ..<span>Δ</span></Pill></MarkRow>
                        </MarkRows>
                    </Card>
                </SideCol>

                <CenterCol>
                    <Shelf>
                        <ShelfLabel>
                            <Ico w={11} h={11} c="#555" sw={2}><path d="M1.5 4V11M5.5 4V11M9.5 4V11M1.5 0V2M5.5 0V2M9.5 0V2" /></Ico>
                            <span>Columns</span>
                        </ShelfLabel>
                        <ShelfPills><Pill $w={148}>Year<SortMark /></Pill></ShelfPills>
                    </Shelf>
                    <Shelf>
                        <ShelfLabel>
                            <Ico w={12} h={11} c="#555" sw={1.5}><path d="M0 1.5H2M4 1.5H12M0 5.5H2M4 5.5H12M0 9.5H2M4 9.5H12" /></Ico>
                            <span>Rows</span>
                        </ShelfLabel>
                        <ShelfPills><Pill $w={148} $green>SUM(Production)</Pill></ShelfPills>
                    </Shelf>
                    <VizRow>
                        <Viz>
                            <VizTitle>Major Crops</VizTitle>
                            <Chart />
                            <SnipHint>Full-screen Snip</SnipHint>
                        </Viz>
                        <Legend>
                            <LegendHead>Crop</LegendHead>
                            <LegendRow><Swatch $c="#e15759" />Rice</LegendRow>
                            <LegendRow><Swatch $c="#79706e" />Sugarcane</LegendRow>
                            <LegendRow><Swatch $c="#d37295" />Wheat</LegendRow>
                        </Legend>
                    </VizRow>
                </CenterCol>

                <Guide>
                    <GuideHead>
                        Data Guide
                        <Ico w={9} h={9} c="#555"><path d="M1 1L8 8M8 1L1 8" /></Ico>
                    </GuideHead>
                    <GuideMain>
                        <GuideBody>
                            <GuideTitle>
                                <svg width="12" height="12" viewBox="0 0 12 12">
                                    <path d="M.5.5H11.5V11.5H.5Z" fill="none" stroke="#777" />
                                    <path d="M2.5 9.5V7H4.5V4H7V6.5H9.5V9.5Z" fill="#bbb" />
                                </svg>
                                Major Crops Growth
                            </GuideTitle>
                            <Section $h={190}>
                                <SectionHead>Viz Details<MinusIco /></SectionHead>
                                <GuideLabel $mt={10}>Viz description</GuideLabel>
                                <DescBox>
                                    Enter a description that helps users understand this viz
                                    <ResizeGrip width="9" height="9" viewBox="0 0 9 9" stroke="#666">
                                        <path d="M1 8L8 1M4 8L8 4M7 8L8 7" />
                                    </ResizeGrip>
                                </DescBox>
                                <GuideLabel $mt={15}>Additional resources</GuideLabel>
                                <AddLink><PlusIco />Add link</AddLink>
                            </Section>
                            <Section $h={45}>
                                <SectionHead>Applied Filters<PlusIco /></SectionHead>
                            </Section>
                            <Section $h={201}>
                                <SectionHead>Data in This Viz<MinusIco /></SectionHead>
                                <TreeHead>
                                    <Ico w={10} h={6} c="#444"><path d="M.5.5L5 5L9.5.5" /></Ico>
                                    India Agriculture Crop Production 1
                                </TreeHead>
                                <TreeList>
                                    <TreeRow><TreeIcon><AbcText $c="#4f9ab8">Abc</AbcText></TreeIcon>Crop</TreeRow>
                                    <TreeRow><TreeIcon><AbcText $c="#4f9ab8">Abc</AbcText></TreeIcon>Year</TreeRow>
                                    <TreeRow><TreeIcon $pl={2}><Hash c="#00a878" /></TreeIcon>Percentile of Production</TreeRow>
                                    <TreeRow><TreeIcon $pl={2}><Hash c="#00a878" /></TreeIcon>Production</TreeRow>
                                </TreeList>
                            </Section>
                            <Section $h={45}>
                                <SectionHead>Data Summary<PlusIco /></SectionHead>
                            </Section>
                            <Section $h={45}>
                                <SectionHead>Detected Outliers<MinusIco /></SectionHead>
                            </Section>
                        </GuideBody>
                        <ScrollTrack>
                            <ScrollUp />
                            <ScrollThumb />
                            <ScrollDown />
                        </ScrollTrack>
                    </GuideMain>
                </Guide>
            </Main>

            <TabBar>
                <SheetTab $w={130} $pl={10}>
                    <Ico w={9} h={12} c="#666"><rect x=".5" y=".5" width="8" height="11" rx="3" /><path d="M.5 3.5H8.5" /></Ico>
                    Data Source
                </SheetTab>
                {TABS.map(t => (
                    <SheetTab key={t.name} $w={t.w} $pl={t.pl} $on={t.on}>
                        {t.icon === 'book' && <BookTab />}
                        {t.icon === 'grid' && <GridTab />}
                        {t.name}
                    </SheetTab>
                ))}
                <AddTab $w={32}>
                    <Ico w={16} h={15} c="#666"><path d="M.5.5H12.5V9M8 11.5H.5V.5" /><path d="M3 9V6M6 9V3M9 9V5" /><AddMark x={12} y={11} /></Ico>
                </AddTab>
                <AddTab $w={32}>
                    <Ico w={16} h={15} c="#666"><path d="M.5.5H11.5V8M8 11.5H.5V.5M6 .5V11.5M.5 6H11.5" /><AddMark x={12} y={11} /></Ico>
                </AddTab>
                <AddTab $w={33}>
                    <Ico w={16} h={15} c="#666"><path d="M.5 1L6 2.5L11.5 1V8M8 12L6 12.5L.5 11V1M6 2.5V12.5" /><AddMark x={12} y={11} /></Ico>
                </AddTab>
            </TabBar>

            <StatusBar>
                <StatusItem $w={65}>69 marks</StatusItem>
                <StatusItem $w={120}>1 row by 23 columns</StatusItem>
                <StatusItem $w={200}>SUM(Production): 10,849,397,182</StatusItem>
                <StatusRight>
                    <StatusCell $w={27} />
                    <StatusCell $w={27} />
                    <StatusCell $w={47} />
                    <StatusCell $w={71}>
                        <svg width="64" height="9" viewBox="0 0 64 9" fill="#666">
                            <path d="M0 0H1.5V9H0ZM7 0V9L2 4.5Z" />
                            <path d="M24 0V9L19 4.5Z" />
                            <path d="M36 0V9L41 4.5Z" />
                            <path d="M52 0L57 4.5L52 9ZM58 0H59.5V9H58Z" />
                        </svg>
                    </StatusCell>
                    <StatusCell $w={68}>
                        <svg width="11" height="11" viewBox="0 0 11 11" fill="#c4c4c4">
                            <path d="M0 0H3V3H0ZM4 0H7V3H4ZM8 0H11V3H8ZM0 4H3V7H0ZM4 4H7V7H4ZM8 4H11V7H8ZM0 8H3V11H0ZM4 8H7V11H4ZM8 8H11V11H8Z" />
                        </svg>
                        <svg width="11" height="11" viewBox="0 0 11 11" fill="#a8a8a8">
                            <path d="M0 0H11V6.5H0ZM0 8H3V11H0ZM4 8H7V11H4ZM8 8H11V11H8Z" />
                        </svg>
                        <svg width="11" height="11" viewBox="0 0 11 11" fill="#666">
                            <path d="M0 0H11V11H0Z" />
                        </svg>
                    </StatusCell>
                </StatusRight>
            </StatusBar>

            <Taskbar>
                <TaskItem $w={48}>
                    <svg width="16" height="16" viewBox="0 0 16 16" fill="#fff">
                        <path d="M0 2.3L6.6 1.4V7.6H0ZM7.4 1.3L16 0V7.6H7.4ZM0 8.4H6.6V14.6L0 13.7ZM7.4 8.4H16V16L7.4 14.7Z" />
                    </svg>
                </TaskItem>
                <TaskItem $w={47}>
                    <Ico w={16} h={16} c="#fff" sw={2}><circle cx="8" cy="8" r="6.5" /></Ico>
                </TaskItem>
                <TaskItem $w={50}>
                    <Ico w={20} h={14} c="#fff" sw={1}><path d="M5 .5H15V13.5H5ZM2.5 2.5H.5V11.5H2.5M17.5 2.5H19.5V11.5H17.5" /></Ico>
                </TaskItem>
                <TaskItem $w={52}><FaEdgeLegacy size={20} color="#0f78d4" /></TaskItem>
                <TaskItem $w={46}>
                    <svg width="22" height="18" viewBox="0 0 22 18">
                        <path d="M0 0H9L11 2H22V18H0Z" fill="#f5cf6b" />
                        <path d="M0 5H22V18H0Z" fill="#fbe39a" />
                        <path d="M6 10H16V18H13V14H9V18H6Z" fill="#4aa3dc" />
                    </svg>
                </TaskItem>
                <TaskItem $w={51}>
                    <svg width="23" height="24" viewBox="0 0 23 24">
                        <path d="M7 6V3C7 1 9 .5 11.5 .5S16 1 16 3V6" fill="none" stroke="#eee" />
                        <path d="M0 6H23V24H0Z" fill="#f1f1f1" />
                        <path d="M7 10.5H11V14.5H7Z" fill="#f25022" />
                        <path d="M12 10.5H16V14.5H12Z" fill="#7fba00" />
                        <path d="M7 15.5H11V19.5H7Z" fill="#00a4ef" />
                        <path d="M12 15.5H16V19.5H12Z" fill="#ffb900" />
                    </svg>
                </TaskItem>
                <TaskItem $w={49}>
                    <svg width="24" height="24" viewBox="0 0 24 24">
                        <path d="M12 12L22.4 6A12 12 0 0 0 1.6 6Z" fill="#db4437" />
                        <path d="M12 12L22.4 6A12 12 0 0 1 12 24Z" fill="#f4b400" />
                        <path d="M12 12L12 24A12 12 0 0 1 1.6 6Z" fill="#0f9d58" />
                        <circle cx="12" cy="12" r="5.6" fill="#fff" />
                        <circle cx="12" cy="12" r="4.4" fill="#4285f4" />
                    </svg>
                </TaskItem>
                <TaskItem $w={48} $on>
                    <svg width="24" height="24" viewBox="0 0 24 24">
                        <rect width="24" height="24" fill="#f4f6f7" />
                        {plus(12, 12, 5, '#3f8fb8', 1.6)}
                        {plus(12, 4.5, 2.5, '#6fb0cf', 1.2)}
                        {plus(12, 19.5, 2.5, '#6fb0cf', 1.2)}
                        {plus(4.5, 12, 2.5, '#6fb0cf', 1.2)}
                        {plus(19.5, 12, 2.5, '#6fb0cf', 1.2)}
                        {plus(7, 7, 1.8, '#8fc0d8', 1)}
                        {plus(17, 7, 1.8, '#8fc0d8', 1)}
                        {plus(7, 17, 1.8, '#8fc0d8', 1)}
                        {plus(17, 17, 1.8, '#8fc0d8', 1)}
                    </svg>
                </TaskItem>
                <Tray>
                    <TrayItem $w={32}>
                        <Ico w={16} h={16} c="#fff" sw={1.1}><circle cx="11" cy="4" r="2.8" /><path d="M8.5 9C11 7 15 8.5 15 12" /><circle cx="5" cy="7.5" r="2.3" /><path d="M1 15C1 10.5 8 10.5 8.5 15" /></Ico>
                    </TrayItem>
                    <TrayItem $w={4} />
                    <TrayItem $w={30}>
                        <Ico w={12} h={7} c="#fff" sw={1.1}><path d="M.5 6.5L6 1L11.5 6.5" /></Ico>
                    </TrayItem>
                    <TrayItem $w={18}>
                        <svg width="18" height="13" viewBox="0 0 18 13">
                            <path d="M.5 2.5H13.5V10.5H.5Z" fill="none" stroke="#fff" />
                            <rect x="2" y="4" width="8" height="5" fill="#fff" />
                            <circle cx="13" cy="9" r="4" fill="#1f9d3a" />
                            <path d="M13 6.5L15 10H11Z" fill="#fff" />
                        </svg>
                    </TrayItem>
                    <TrayItem $w={30}>
                        <Ico w={17} h={14} c="#fff" sw={1}><path d="M.5 4.5H3.5L7 1.5V12.5L3.5 9.5H.5Z" /><path d="M9.5 4.5C10.5 6 10.5 8 9.5 9.5M12 3C13.8 5.5 13.8 8.5 12 11M14.5 1.5C17 5 17 9 14.5 12.5" /></Ico>
                    </TrayItem>
                    <TrayItem $w={22}>
                        <Ico w={14} h={13} c="#fff" sw={1}><path d="M1 7C4 3.5 8 2.5 12 2.5M2.5 9.5C5 7 8 6 11 6M4.5 12C6 10 8 9 10 9" /><circle cx="11.5" cy="11" r="1.2" fill="#fff" stroke="none" /></Ico>
                    </TrayItem>
                    <Clock>00:49<br />16-10-2023</Clock>
                    <TrayItem $w={42}>
                        <Ico w={16} h={15} c="#fff" sw={1}><path d="M.5.5H15.5V11.5H10L8 14L6 11.5H.5Z" /></Ico>
                    </TrayItem>
                    <ShowDesktop />
                </Tray>
            </Taskbar>
        </Page>
    )
}
